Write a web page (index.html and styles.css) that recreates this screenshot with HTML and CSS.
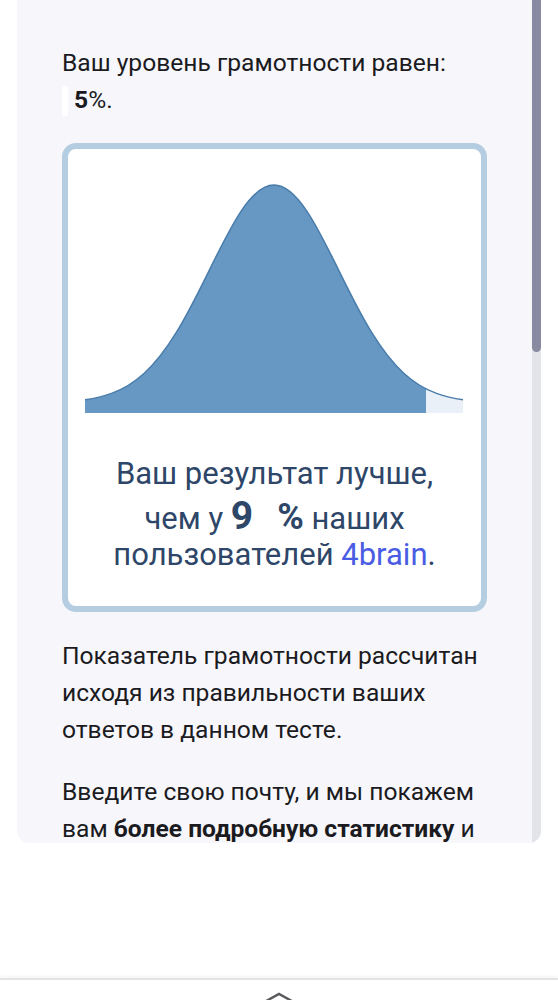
FILE: index.html
```html
<!DOCTYPE html>
<html lang="ru">
<head>
<meta charset="utf-8">
<title>Результат</title>
<link rel="stylesheet" href="styles.css">
</head>
<body>
<div class="panel">
  <div class="scrollbar"><div class="thumb"></div></div>
  <p class="level">Ваш уровень грамотности равен:<br><span class="blank"></span><b>5</b>%.</p>
  <div class="card">
    <svg class="chart" width="378" height="233" viewBox="0 0 378 233">
      <defs>
        <clipPath id="clip-main"><rect x="0" y="0" width="341" height="233"/></clipPath>
        <clipPath id="clip-rest"><rect x="341" y="0" width="37" height="233"/></clipPath>
      </defs>
      <path class="fill-main" clip-path="url(#clip-main)" d="M0,219.8 C8.83,218.55 17.67,216.65 26.5,213.4 C37.67,209.41 48.17,203.34 59,193.5 C69.83,183.66 80.67,169.89 91.5,152.2 C102.33,134.51 113.17,112.83 124,90.8 C134.83,68.77 145.67,46.63 156.5,30.6 C167.33,14.57 178.17,5 189,5 C199.83,5 210.67,14.57 221.5,30.6 C232.33,46.63 243.17,68.77 254,90.8 C264.83,112.83 275.67,134.51 286.5,152.2 C297.33,169.89 308.17,183.66 319,193.5 C329.83,203.34 340.33,209.41 351.5,213.4 C360.33,216.65 369.17,218.55 378,219.8 L378,233 L0,233 Z"/>
      <path class="fill-rest" clip-path="url(#clip-rest)" d="M0,219.8 C8.83,218.55 17.67,216.65 26.5,213.4 C37.67,209.41 48.17,203.34 59,193.5 C69.83,183.66 80.67,169.89 91.5,152.2 C102.33,134.51 113.17,112.83 124,90.8 C134.83,68.77 145.67,46.63 156.5,30.6 C167.33,14.57 178.17,5 189,5 C199.83,5 210.67,14.57 221.5,30.6 C232.33,46.63 243.17,68.77 254,90.8 C264.83,112.83 275.67,134.51 286.5,152.2 C297.33,169.89 308.17,183.66 319,193.5 C329.83,203.34 340.33,209.41 351.5,213.4 C360.33,216.65 369.17,218.55 378,219.8 L378,233 L0,233 Z"/>
      <path class="curve" d="M0,219.8 C8.83,218.55 17.67,216.65 26.5,213.4 C37.67,209.41 48.17,203.34 59,193.5 C69.83,183.66 80.67,169.89 91.5,152.2 C102.33,134.51 113.17,112.83 124,90.8 C134.83,68.77 145.67,46.63 156.5,30.6 C167.33,14.57 178.17,5 189,5 C199.83,5 210.67,14.57 221.5,30.6 C232.33,46.63 243.17,68.77 254,90.8 C264.83,112.83 275.67,134.51 286.5,152.2 C297.33,169.89 308.17,183.66 319,193.5 C329.83,203.34 340.33,209.41 351.5,213.4 C360.33,216.65 369.17,218.55 378,219.8"/>
    </svg>
    <p class="result">
      <span class="line">Ваш результат лучше,</span>
      <span class="line line-mid">чем у <b class="big">9</b><span class="gap"></span><b class="pct">%</b> наших</span>
      <span class="line">пользователей <span class="brand">4brain</span>.</span>
    </p>
  </div>
  <p class="info">Показатель грамотности рассчитан исходя из правильности ваших ответов в данном тесте.</p>
  <p class="info">Введите свою почту, и мы покажем вам <b>более подробную статистику</b> и</p>
</div>
<div class="bottom-nav">
  <svg class="chevron" width="44" height="16" viewBox="0 0 44 16"><polyline points="2,14 22,3 42,14"/></svg>
</div>
</body>
</html>
```
FILE: styles.css
```css
html, body {
  margin: 0;
  padding: 0;
  background: #ffffff;
  font-family: Roboto, "Noto Sans", Arial, sans-serif;
  color: #1b1b1f;
}

.panel {
  position: relative;
  margin-left: 17px;
  width: 524px;
  height: 843px;
  box-sizing: border-box;
  padding: 44px 54px 0 45px;
  background: #f7f7fb;
  border-radius: 0 0 12px 12px;
  overflow: hidden;
}

.scrollbar {
  position: absolute;
  top: 0;
  right: 0;
  width: 9px;
  height: 100%;
  background: #e3e4e9;
}

.thumb {
  width: 9px;
  height: 352px;
  background: #878aa1;
  border-radius: 0 0 5px 5px;
}

.level {
  margin: 0;
  font-size: 24.6px;
  line-height: 37px;
}

.level b {
  font-weight: 700;
}

.blank {
  display: inline-block;
  width: 6px;
  height: 30px;
  margin-right: 6px;
  vertical-align: -8px;
  background: #ffffff;
  border-radius: 3px;
}

.card {
  margin-top: 25px;
  width: 425px;
  box-sizing: border-box;
  border: 6px solid #b5cde1;
  border-radius: 14px;
  background: #ffffff;
  padding: 31px 0 33px 17px;
}

.chart {
  display: block;
}

.fill-main {
  fill: #6698c3;
}

.fill-rest {
  fill: #e9f0f8;
}

.curve {
  fill: none;
  stroke: #4a7cab;
  stroke-width: 1.5;
}

.result {
  margin: 43px 17px 0 0;
  text-align: center;
  font-size: 31px;
  line-height: 36px;
  color: #2e4668;
}

.line {
  display: block;
}

.line-mid {
  margin-top: 6px;
}

.result .big {
  font-size: 39px;
  line-height: 36px;
  font-weight: 700;
}

.result .pct {
  font-size: 36px;
  line-height: 36px;
  font-weight: 700;
}

.gap {
  display: inline-block;
  width: 24px;
}

.brand {
  color: #4a5ce3;
}

.info {
  margin: 25px 0 0 0;
  font-size: 24.6px;
  line-height: 37px;
}

.info b {
  font-weight: 700;
}

.bottom-nav {
  margin-top: 135px;
  height: 30px;
  border-top: 2px solid #e4e4e6;
  box-shadow: 0 -2px 3px rgba(0, 0, 0, 0.04);
  background: #ffffff;
  display: flex;
  justify-content: center;
  padding-top: 11px;
  box-sizing: border-box;
}

.chevron {
  display: block;
}

.chevron polyline {
  fill: none;
  stroke: #5a5a5e;
  stroke-width: 2.5;
}
```
